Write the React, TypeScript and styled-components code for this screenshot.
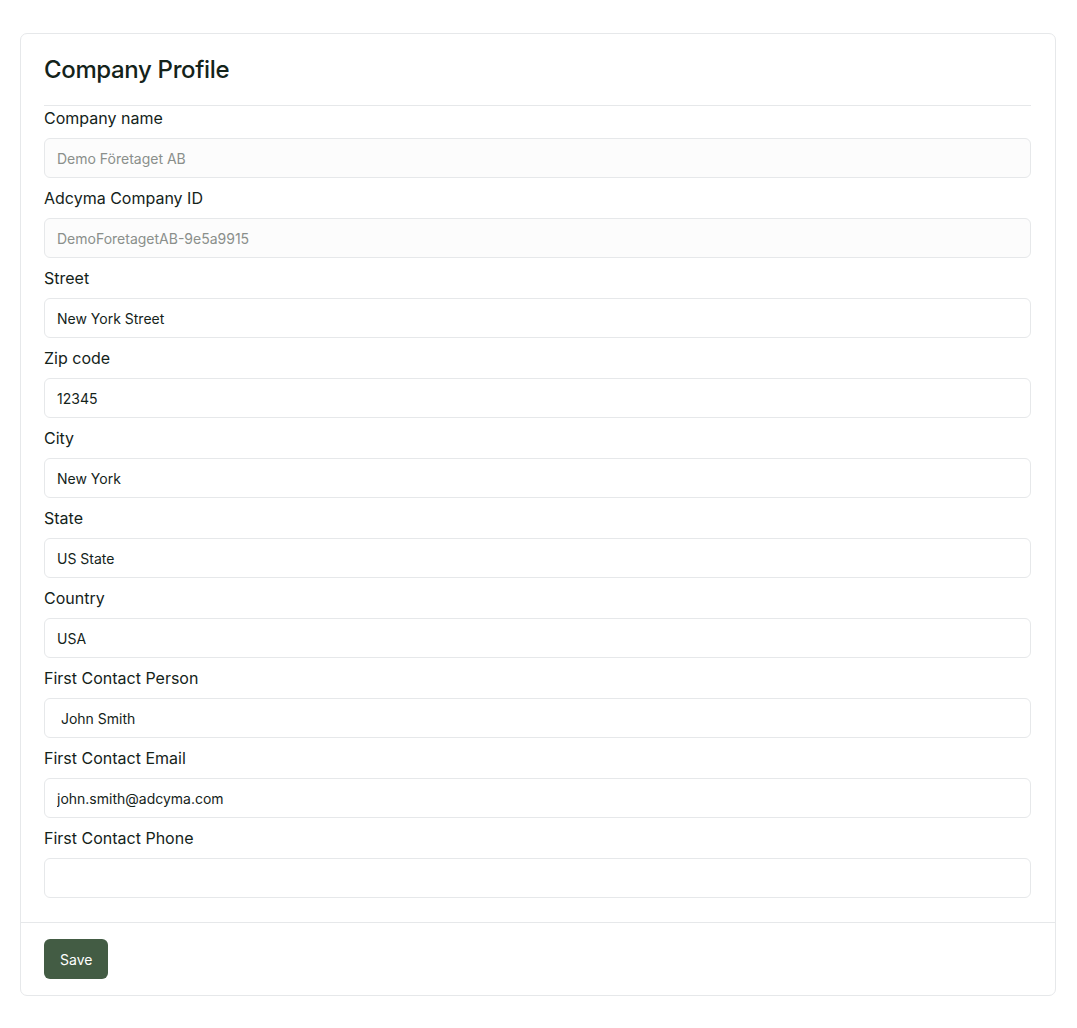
import React from "react";
import styled, { createGlobalStyle } from "styled-components";

const Global = createGlobalStyle`
  html, body { margin: 0; padding: 0; background: #ffffff; }
  body { font-family: Inter, "Noto Sans", "Liberation Sans", sans-serif; color: #14231a; }
  * { box-sizing: border-box; }
`;

const Page = styled.div`
  padding: 33px 21px 32px 20px;
`;

const Card = styled.form`
  border: 1px solid #e6e8ea;
  border-radius: 7px;
  background: #ffffff;
  display: flex;
  flex-direction: column;
`;

const Header = styled.div`
  margin: 0 24px 0 23px;
  padding: 20px 0 19px;
  border-bottom: 1px solid #e6e8ea;
`;

const Title = styled.h2`
  margin: 0;
  font-size: 24px;
  line-height: 32px;
  font-weight: 500;
  letter-spacing: -0.35px;
  color: #14231a;
`;

const Body = styled.div`
  display: flex;
  flex-direction: column;
  gap: 8px;
  padding: 0 24px 24px 23px;
`;

const Field = styled.div`
  display: flex;
  flex-direction: column;
  gap: 8px;
`;

const Label = styled.label`
  font-size: 16px;
  line-height: 24px;
  font-weight: 400;
  color: #14231a;
`;

const Input = styled.input<{ $disabled?: boolean }>`
  height: 40px;
  width: 100%;
  border: 1px solid #e6e8ea;
  border-radius: 6px;
  padding: 0 12px;
  font-family: Inter, "Noto Sans", "Liberation Sans", sans-serif;
  font-size: 14px;
  color: ${(p) => (p.$disabled ? "#8a8f8b" : "#14231a")};
  background: ${(p) => (p.$disabled ? "#fcfcfc" : "#ffffff")};
  -webkit-text-fill-color: ${(p) => (p.$disabled ? "#8a8f8b" : "#14231a")};
  opacity: 1;
  outline: none;
`;

const Footer = styled.div`
  border-top: 1px solid #e6e8ea;
  padding: 16px 24px 16px 23px;
  display: flex;
`;

const Button = styled.button`
  height: 40px;
  padding: 0 16px;
  border: none;
  border-radius: 6px;
  background: #435c44;
  color: #ffffff;
  font-family: Inter, "Noto Sans", "Liberation Sans", sans-serif;
  font-size: 14px;
  font-weight: 400;
  cursor: pointer;
`;

type F = { label: string; value: string; disabled?: boolean };

const fields: F[] = [
  { label: "Company name", value: "Demo Företaget AB", disabled: true },
  { label: "Adcyma Company ID", value: "DemoForetagetAB-9e5a9915", disabled: true },
  { label: "Street", value: "New York Street" },
  { label: "Zip code", value: "12345" },
  { label: "City", value: "New York" },
  { label: "State", value: "US State" },
  { label: "Country", value: "USA" },
  { label: "First Contact Person", value: " John Smith" },
  { label: "First Contact Email", value: "john.smith@adcyma.com" },
  { label: "First Contact Phone", value: "" },
];

export default function App() {
  return (
    <>
      <Global />
      <Page>
        <Card onSubmit={(e) => e.preventDefault()}>
          <Header>
            <Title>Company Profile</Title>
          </Header>
          <Body>
            {fields.map((f, i) => (
              <Field key={i}>
                <Label htmlFor={`f${i}`}>{f.label}</Label>
                <Input
                  id={`f${i}`}
                  defaultValue={f.value}
                  disabled={f.disabled}
                  $disabled={f.disabled}
                />
              </Field>
            ))}
          </Body>
          <Footer>
            <Button type="submit">Save</Button>
          </Footer>
        </Card>
      </Page>
    </>
  );
}
